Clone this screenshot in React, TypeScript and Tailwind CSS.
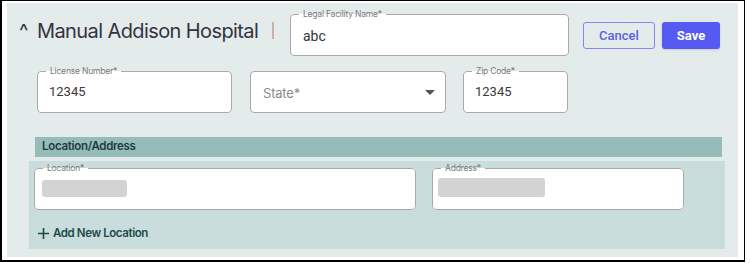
import type { ReactNode } from "react";

const sans = "font-['Inter','Noto_Sans',sans-serif]";
const roboto = "font-['Roboto','Liberation_Sans',sans-serif]";

function OutlinedField({
  label,
  width,
  children,
  contentClass,
}: {
  label: string;
  width: string;
  children: ReactNode;
  contentClass: string;
}) {
  return (
    <fieldset
      className={`${width} h-[47px] rounded-[4px] border border-[#a9a9a9] bg-white`}
    >
      <legend
        className={`ml-[8px] px-[4px] text-[8.5px] leading-[10px] tracking-[-0.2px] text-[#7a7a7a] ${sans}`}
      >
        {label}
      </legend>
      <div className={contentClass}>{children}</div>
    </fieldset>
  );
}

function Skeleton({ w, h }: { w: string; h: string }) {
  return <div className={`${w} ${h} rounded-[3px] bg-[#d3d3d3]`} />;
}

export default function App() {
  return (
    <div className="w-[750px] h-[263px] bg-white">
      <div className="w-[745px] h-[262px] border-l-2 border-t border-b-2 border-r border-black bg-white pl-[5px] pt-[2px] pr-[6px] pb-[3px]">
        <div className="h-full bg-[#e3ebeb]">
          {/* ── Header row ─────────────────────────────────── */}
          <div className="flex items-start pt-[6px]">
            <span
              className={`ml-[12px] mt-[10px] w-[18px] text-[20px] leading-[25px] text-[#33333f] ${sans}`}
            >
              ^
            </span>
            <h1
              className={`mt-[10px] w-[235px] whitespace-nowrap text-[20px] leading-[25px] tracking-[-0.6px] text-[#33333f] ${sans}`}
            >
              Manual Addison Hospital
            </h1>
            <div className="mt-[13px] h-[17px] w-[2px] bg-[#c6b3a3]" />
            <OutlinedField
              label="Legal Facility Name*"
              width="w-[279px] ml-[16px]"
              contentClass={`px-[12px] pt-[7px] text-[14px] leading-[20px] text-[#333] ${roboto}`}
            >
              abc
            </OutlinedField>
            <button
              className={`ml-[14px] mt-[13px] h-[27px] w-[72px] rounded-[3px] border border-[#8387f2] text-[13px] font-medium text-[#5a5ee8] ${roboto}`}
            >
              Cancel
            </button>
            <button
              className={`ml-[7px] mt-[13px] h-[27px] w-[58px] rounded-[3px] bg-[#5659f2] text-[13px] font-bold text-white shadow-sm ${roboto}`}
            >
              Save
            </button>
          </div>

          {/* ── Second row ─────────────────────────────────── */}
          <div className="mt-[10px] flex items-start pl-[30px]">
            <OutlinedField
              label="License Number*"
              width="w-[195px]"
              contentClass={`px-[11px] pt-[6px] text-[13px] leading-[20px] text-[#3a3a3a] ${roboto}`}
            >
              12345
            </OutlinedField>
            <div
              className={`ml-[18px] mt-[5px] flex h-[42px] w-[196px] items-center justify-between rounded-[4px] border border-[#a9a9a9] bg-white pl-[12px] pr-[10px] ${sans}`}
            >
              <span className="pt-[3px] text-[13px] tracking-[-0.2px] text-[#8a8a8a]">State*</span>
              <svg width="10" height="5" viewBox="0 0 10 5">
                <path d="M0 0 L10 0 L5 5 Z" fill="#555" />
              </svg>
            </div>
            <OutlinedField
              label="Zip Code*"
              width="w-[105px] ml-[17px]"
              contentClass={`px-[11px] pt-[6px] text-[13px] leading-[20px] text-[#3a3a3a] ${roboto}`}
            >
              12345
            </OutlinedField>
          </div>

          {/* ── Location / Address ─────────────────────────── */}
          <div
            className={`ml-[28px] mt-[24px] flex h-[20px] w-[687px] items-center bg-[#95bcb8] pl-[7px] text-[11.5px] font-semibold tracking-[-0.3px] text-[#1e3b40] ${sans}`}
          >
            Location/Address
          </div>
          <div className="ml-[22px] mt-[4px] h-[88px] w-[696px] bg-[#c9dedc] pl-[5px] pt-[2px]">
            <div className="flex items-start">
              <OutlinedField
                label="Location*"
                width="w-[382px]"
                contentClass="pl-[7px] pt-[7px]"
              >
                <Skeleton w="w-[85px]" h="h-[17px]" />
              </OutlinedField>
              <OutlinedField
                label="Address*"
                width="w-[252px] ml-[16px]"
                contentClass="pl-[5px] pt-[5px]"
              >
                <Skeleton w="w-[107px]" h="h-[19px]" />
              </OutlinedField>
            </div>
            <button
              className={`ml-[4px] mt-[15px] flex items-center gap-[4px] text-[11.5px] font-semibold tracking-[-0.4px] text-[#1c4a4c] ${sans}`}
            >
              <svg width="11" height="11" viewBox="0 0 11 11">
                <path d="M5.5 0 V11 M0 5.5 H11" stroke="#1c4a4c" strokeWidth="1.6" />
              </svg>
              Add New Location
            </button>
          </div>
        </div>
      </div>
    </div>
  );
}
